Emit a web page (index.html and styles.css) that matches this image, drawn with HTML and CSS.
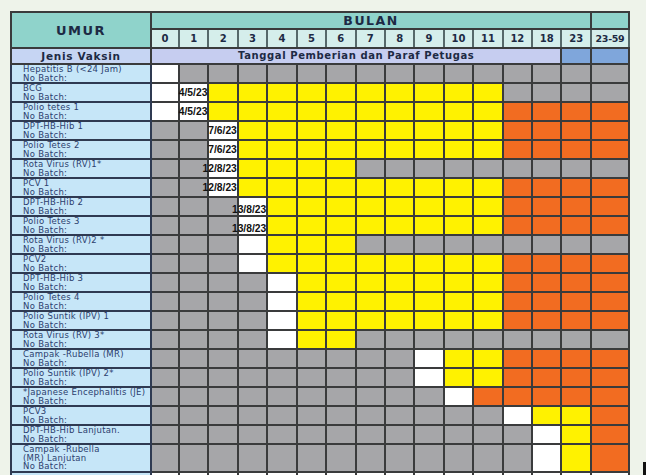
FILE: index.html
```html
<!DOCTYPE html>
<html lang="id">
<head>
<meta charset="utf-8">
<title>Imunisasi</title>
<link rel="stylesheet" href="styles.css">
</head>
<body>
<div class="page">
<table class="imm">
<colgroup>
<col class="c-label"><col class="c-m0">
<col class="c-m"><col class="c-m"><col class="c-m"><col class="c-m"><col class="c-m"><col class="c-m"><col class="c-m">
<col class="c-m"><col class="c-m"><col class="c-m"><col class="c-m"><col class="c-m"><col class="c-m"><col class="c-m">
<col class="c-last">
</colgroup>
<thead>
<tr class="r-bulan"><th class="umur" rowspan="2">UMUR</th><th class="bulan" colspan="15">BULAN</th><th class="bulan"></th></tr>
<tr class="r-num"><th>0</th><th>1</th><th>2</th><th>3</th><th>4</th><th>5</th><th>6</th><th>7</th><th>8</th><th>9</th><th>10</th><th>11</th><th>12</th><th>18</th><th>23</th><th class="n-last">23-59</th></tr>
<tr class="r-jenis"><th class="jenis">Jenis Vaksin</th><th class="tanggal" colspan="14">Tanggal Pemberian dan Paraf Petugas</th><th class="blue"></th><th class="blue"></th></tr>
</thead>
<tbody>
<tr><th class="lbl">Hepatitis B (&lt;24 Jam)<br>No Batch:</th><td class="w"></td><td class="g"></td><td class="g"></td><td class="g"></td><td class="g"></td><td class="g"></td><td class="g"></td><td class="g"></td><td class="g"></td><td class="g"></td><td class="g"></td><td class="g"></td><td class="g"></td><td class="g"></td><td class="g"></td><td class="g"></td></tr>
<tr><th class="lbl">BCG<br>No Batch:</th><td class="w"></td><td class="w"><div class="date">4/5/23</div></td><td class="y"></td><td class="y"></td><td class="y"></td><td class="y"></td><td class="y"></td><td class="y"></td><td class="y"></td><td class="y"></td><td class="y"></td><td class="y"></td><td class="g"></td><td class="g"></td><td class="g"></td><td class="g"></td></tr>
<tr><th class="lbl">Polio tetes 1<br>No Batch:</th><td class="w"></td><td class="w"><div class="date">4/5/23</div></td><td class="y"></td><td class="y"></td><td class="y"></td><td class="y"></td><td class="y"></td><td class="y"></td><td class="y"></td><td class="y"></td><td class="y"></td><td class="y"></td><td class="o"></td><td class="o"></td><td class="o"></td><td class="o"></td></tr>
<tr><th class="lbl">DPT-HB-Hib 1<br>No Batch:</th><td class="g"></td><td class="g"></td><td class="w"><div class="date">7/6/23</div></td><td class="y"></td><td class="y"></td><td class="y"></td><td class="y"></td><td class="y"></td><td class="y"></td><td class="y"></td><td class="y"></td><td class="y"></td><td class="o"></td><td class="o"></td><td class="o"></td><td class="o"></td></tr>
<tr><th class="lbl">Polio Tetes 2<br>No Batch:</th><td class="g"></td><td class="g"></td><td class="w"><div class="date">7/6/23</div></td><td class="y"></td><td class="y"></td><td class="y"></td><td class="y"></td><td class="y"></td><td class="y"></td><td class="y"></td><td class="y"></td><td class="y"></td><td class="o"></td><td class="o"></td><td class="o"></td><td class="o"></td></tr>
<tr><th class="lbl">Rota Virus (RV)1*<br>No Batch:</th><td class="g"></td><td class="g"></td><td class="w"><div class="date">12/8/23</div></td><td class="y"></td><td class="y"></td><td class="y"></td><td class="y"></td><td class="g"></td><td class="g"></td><td class="g"></td><td class="g"></td><td class="g"></td><td class="g"></td><td class="g"></td><td class="g"></td><td class="g"></td></tr>
<tr><th class="lbl">PCV 1<br>No Batch:</th><td class="g"></td><td class="g"></td><td class="w"><div class="date">12/8/23</div></td><td class="y"></td><td class="y"></td><td class="y"></td><td class="y"></td><td class="y"></td><td class="y"></td><td class="y"></td><td class="y"></td><td class="y"></td><td class="o"></td><td class="o"></td><td class="o"></td><td class="o"></td></tr>
<tr><th class="lbl">DPT-HB-Hib 2<br>No Batch:</th><td class="g"></td><td class="g"></td><td class="g"></td><td class="w"><div class="date low">13/8/23</div></td><td class="y"></td><td class="y"></td><td class="y"></td><td class="y"></td><td class="y"></td><td class="y"></td><td class="y"></td><td class="y"></td><td class="o"></td><td class="o"></td><td class="o"></td><td class="o"></td></tr>
<tr><th class="lbl">Polio Tetes 3<br>No Batch:</th><td class="g"></td><td class="g"></td><td class="g"></td><td class="w"><div class="date low">13/8/23</div></td><td class="y"></td><td class="y"></td><td class="y"></td><td class="y"></td><td class="y"></td><td class="y"></td><td class="y"></td><td class="y"></td><td class="o"></td><td class="o"></td><td class="o"></td><td class="o"></td></tr>
<tr><th class="lbl">Rota Virus (RV)2 *<br>No Batch:</th><td class="g"></td><td class="g"></td><td class="g"></td><td class="w"></td><td class="y"></td><td class="y"></td><td class="y"></td><td class="g"></td><td class="g"></td><td class="g"></td><td class="g"></td><td class="g"></td><td class="g"></td><td class="g"></td><td class="g"></td><td class="g"></td></tr>
<tr><th class="lbl">PCV2<br>No Batch:</th><td class="g"></td><td class="g"></td><td class="g"></td><td class="w"></td><td class="y"></td><td class="y"></td><td class="y"></td><td class="y"></td><td class="y"></td><td class="y"></td><td class="y"></td><td class="y"></td><td class="o"></td><td class="o"></td><td class="o"></td><td class="o"></td></tr>
<tr><th class="lbl">DPT-HB-Hib 3<br>No Batch:</th><td class="g"></td><td class="g"></td><td class="g"></td><td class="g"></td><td class="w"></td><td class="y"></td><td class="y"></td><td class="y"></td><td class="y"></td><td class="y"></td><td class="y"></td><td class="y"></td><td class="o"></td><td class="o"></td><td class="o"></td><td class="o"></td></tr>
<tr><th class="lbl">Polio Tetes 4<br>No Batch:</th><td class="g"></td><td class="g"></td><td class="g"></td><td class="g"></td><td class="w"></td><td class="y"></td><td class="y"></td><td class="y"></td><td class="y"></td><td class="y"></td><td class="y"></td><td class="y"></td><td class="o"></td><td class="o"></td><td class="o"></td><td class="o"></td></tr>
<tr><th class="lbl">Polio Suntik (IPV) 1<br>No Batch:</th><td class="g"></td><td class="g"></td><td class="g"></td><td class="g"></td><td class="w"></td><td class="y"></td><td class="y"></td><td class="y"></td><td class="y"></td><td class="y"></td><td class="y"></td><td class="y"></td><td class="o"></td><td class="o"></td><td class="o"></td><td class="o"></td></tr>
<tr><th class="lbl">Rota Virus (RV) 3*<br>No Batch:</th><td class="g"></td><td class="g"></td><td class="g"></td><td class="g"></td><td class="w"></td><td class="y"></td><td class="y"></td><td class="g"></td><td class="g"></td><td class="g"></td><td class="g"></td><td class="g"></td><td class="g"></td><td class="g"></td><td class="g"></td><td class="g"></td></tr>
<tr><th class="lbl">Campak -Rubella (MR)<br>No Batch:</th><td class="g"></td><td class="g"></td><td class="g"></td><td class="g"></td><td class="g"></td><td class="g"></td><td class="g"></td><td class="g"></td><td class="g"></td><td class="w"></td><td class="y"></td><td class="y"></td><td class="o"></td><td class="o"></td><td class="o"></td><td class="o"></td></tr>
<tr><th class="lbl">Polio Suntik (IPV) 2*<br>No Batch:</th><td class="g"></td><td class="g"></td><td class="g"></td><td class="g"></td><td class="g"></td><td class="g"></td><td class="g"></td><td class="g"></td><td class="g"></td><td class="w"></td><td class="y"></td><td class="y"></td><td class="o"></td><td class="o"></td><td class="o"></td><td class="o"></td></tr>
<tr><th class="lbl">*Japanese Encephalitis (JE)<br>No Batch:</th><td class="g"></td><td class="g"></td><td class="g"></td><td class="g"></td><td class="g"></td><td class="g"></td><td class="g"></td><td class="g"></td><td class="g"></td><td class="g"></td><td class="w"></td><td class="o"></td><td class="o"></td><td class="o"></td><td class="o"></td><td class="o"></td></tr>
<tr><th class="lbl">PCV3<br>No Batch:</th><td class="g"></td><td class="g"></td><td class="g"></td><td class="g"></td><td class="g"></td><td class="g"></td><td class="g"></td><td class="g"></td><td class="g"></td><td class="g"></td><td class="g"></td><td class="g"></td><td class="w"></td><td class="y"></td><td class="y"></td><td class="o"></td></tr>
<tr><th class="lbl">DPT-HB-Hib Lanjutan.<br>No Batch:</th><td class="g"></td><td class="g"></td><td class="g"></td><td class="g"></td><td class="g"></td><td class="g"></td><td class="g"></td><td class="g"></td><td class="g"></td><td class="g"></td><td class="g"></td><td class="g"></td><td class="g"></td><td class="w"></td><td class="y"></td><td class="o"></td></tr>
<tr class="r-tall"><th class="lbl">Campak -Rubella<br>(MR) Lanjutan<br>No Batch:</th><td class="g"></td><td class="g"></td><td class="g"></td><td class="g"></td><td class="g"></td><td class="g"></td><td class="g"></td><td class="g"></td><td class="g"></td><td class="g"></td><td class="g"></td><td class="g"></td><td class="g"></td><td class="w"></td><td class="y"></td><td class="o"></td></tr>
<tr><th class="lbl"></th><td class="w"></td><td class="w"></td><td class="w"></td><td class="w"></td><td class="w"></td><td class="w"></td><td class="w"></td><td class="w"></td><td class="w"></td><td class="w"></td><td class="w"></td><td class="w"></td><td class="w"></td><td class="w"></td><td class="w"></td><td class="w"></td></tr>
</tbody>
</table>
<div class="mark"></div>
</div>
</body>
</html>
```

FILE: styles.css
```css
html, body {
  margin: 0;
  padding: 0;
  overflow: hidden;
  background: #eef3ea;
}

.page {
  position: relative;
  width: 646px;
  height: 475px;
  box-sizing: border-box;
  padding: 11px 0 0 10px;
  overflow: hidden;
}

.imm {
  border-collapse: collapse;
  table-layout: fixed;
  width: 618px;
  border: 2px solid #2f3436;
  font-family: "DejaVu Sans", Verdana, sans-serif;
}

.c-label { width: 140px; }
.c-m0 { width: 28px; }
.c-m { width: 29.43px; }
.c-last { width: 38px; }

.imm th, .imm td {
  border: 2px solid #3a3b3c;
  padding: 0;
}

.r-bulan { height: 17px; }
.r-num { height: 19px; }
.r-jenis { height: 16px; }
tbody tr { height: 19px; }
tbody tr.r-tall { height: 27px; }

.umur, .bulan {
  background: #8fd3cb;
  color: #1d2a44;
  font-weight: bold;
  letter-spacing: 1.5px;
}

.umur { font-size: 13px; }
.bulan { font-size: 12.5px; line-height: 13px; }

.r-num th {
  background: #d5eeeb;
  color: #1d2a44;
  font-size: 10px;
  font-weight: bold;
  line-height: 12px;
  border-color: #56696a;
  border-top-color: #3a3b3c;
  border-bottom-color: #3a3b3c;
}

.r-num th.n-last { font-size: 9.5px; letter-spacing: -0.3px; }

.jenis {
  background: #c6d5f3;
  color: #1d2a44;
  font-size: 10.5px;
  font-weight: bold;
  letter-spacing: 0.7px;
  line-height: 12px;
}

.tanggal {
  background: #c6cdf0;
  color: #1d2a44;
  font-size: 10px;
  font-weight: bold;
  letter-spacing: 0.6px;
  line-height: 12px;
}

.blue { background: #7fa6db; }

.lbl {
  background: #c6e6f8;
  color: #2c3e6e;
  font-size: 8.5px;
  letter-spacing: 0.3px;
  font-weight: normal;
  line-height: 8.5px;
  text-align: left;
  padding: 0 0 0 11px !important;
  white-space: nowrap;
  overflow: hidden;
  border-color: #2f3a52 !important;
}

.g { background: #a6a6a9; }
.y { background: #fff200; }
.o { background: #f26c21; }
.w { background: #ffffff; }

.date {
  display: flex;
  justify-content: flex-end;
  align-items: center;
  white-space: nowrap;
  font-family: "Liberation Sans", Arial, sans-serif;
  font-weight: bold;
  font-size: 10.3px;
  line-height: 11px;
  color: #111;
}

.date.low { padding-top: 5px; }

.mark {
  position: absolute;
  left: 643px;
  top: 462px;
  width: 3px;
  height: 13px;
  background: #111;
}
```
